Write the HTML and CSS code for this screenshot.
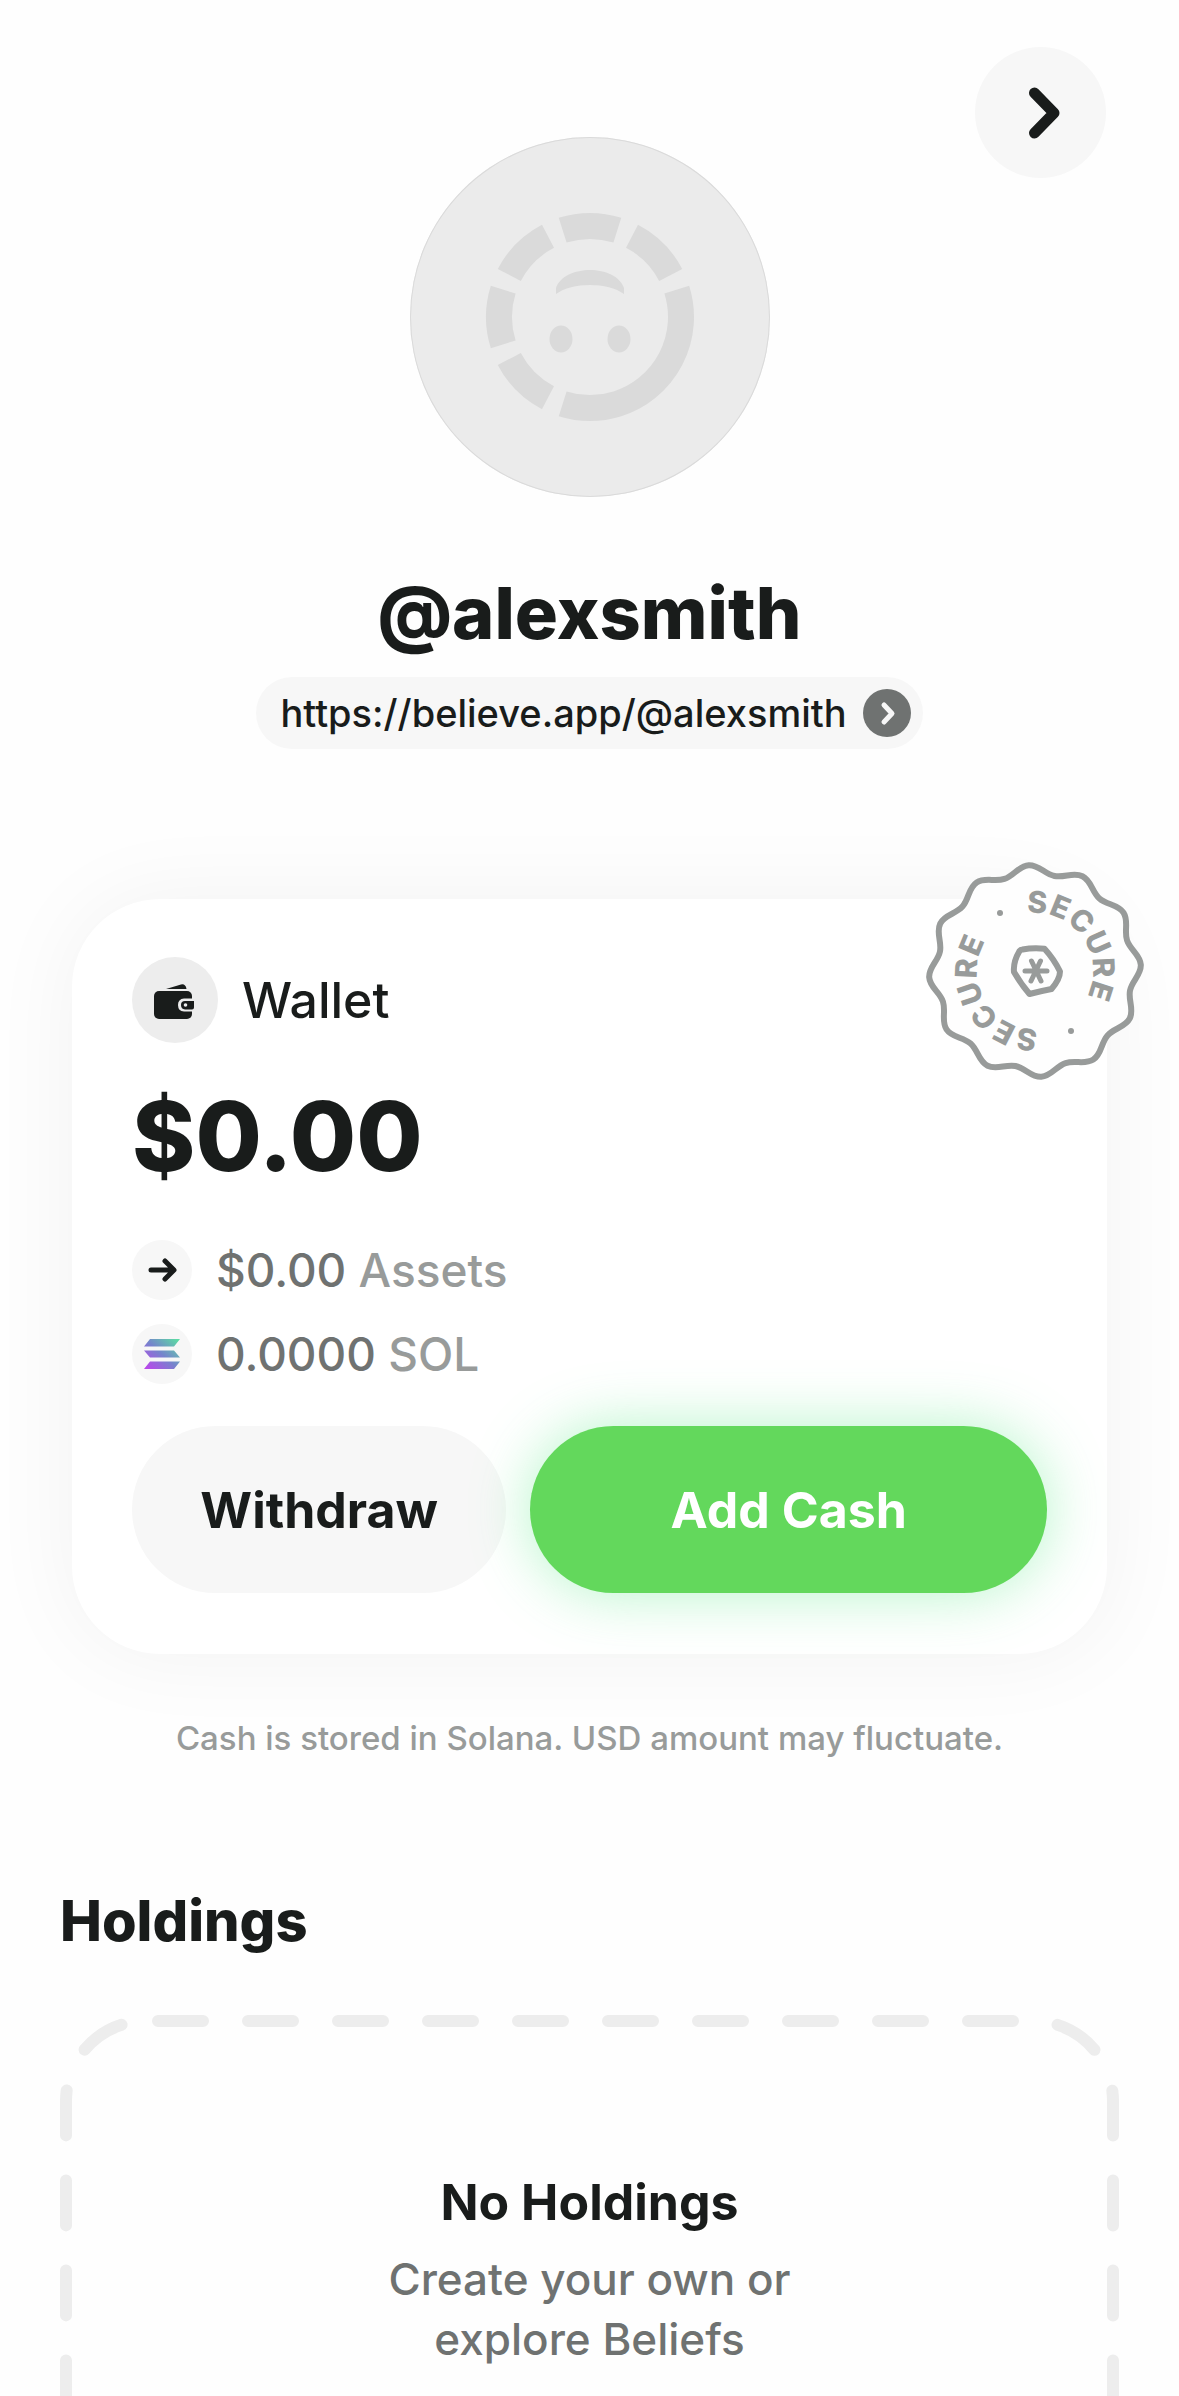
FILE: index.html
```html
<!DOCTYPE html>
<html lang="en">
<head>
    <meta charset="UTF-8">
    <meta name="viewport" content="width=device-width, initial-scale=1.0">
    <title>@alexsmith</title>
    <link rel="stylesheet" href="styles.css">
</head>
<body>
    <main class="page">
        <header class="profile">
            <div class="profile-top">
                <div class="avatar">
                    <svg viewBox="0 0 360 360" aria-hidden="true">
                        <circle class="avatar-ring" cx="180" cy="180" r="91" pathLength="360" transform="rotate(-107.5 180 180)"/>
                        <path d="M146 157V151C154 127 206 127 214 151V157C198 145 162 145 146 157Z"/>
                        <ellipse cx="151" cy="202" rx="11.5" ry="13.5"/>
                        <ellipse cx="209" cy="202" rx="11.5" ry="13.5"/>
                    </svg>
                </div>
                <button class="next-button" type="button" aria-label="Next">
                    <svg viewBox="0 0 131 131" aria-hidden="true">
                        <path d="M59.5 46L79 66L59.5 86"/>
                    </svg>
                </button>
            </div>
            <h1 class="handle">@alexsmith</h1>
            <a class="profile-link" href="https://believe.app/@alexsmith">
                https://believe.app/@alexsmith
                <svg viewBox="0 0 48 48" aria-hidden="true">
                    <circle cx="24" cy="24" r="24"/>
                    <path d="M21 16L29 24.500L21 33"/>
                </svg>
            </a>
        </header>

        <section class="wallet">
            <div class="wallet-title">
                <svg class="wallet-icon" viewBox="0 0 86 86" aria-hidden="true">
                    <circle cx="43" cy="43" r="43" fill="#ededed"/>
                    <path d="M34 32L49 27.500Q53.500 26.500 54.500 32Z"/>
                    <rect x="22" y="34" width="38" height="28" rx="5"/>
                    <path d="M63 41.500H52Q46 42 46 48T52 54.500H63Z" fill="#ededed"/>
                    <path d="M62 44H53Q49 44 49 48T53 52.500H60Q62 52.500 62 50.500Z"/>
                    <circle cx="53.500" cy="48" r="1.800" fill="#ededed"/>
                </svg>
                <h2>Wallet</h2>
            </div>
            <p class="balance">$0.00</p>
            <ul class="amounts">
                <li>
                    <svg class="amount-icon" viewBox="0 0 60 60" aria-hidden="true">
                        <circle cx="30" cy="30" r="30" fill="#f7f7f7"/>
                        <path class="arrow" d="M19 30H41M33 21L42 30L33 39"/>
                    </svg>
                    <span>$0.00 <span class="unit">Assets</span></span>
                </li>
                <li>
                    <svg class="amount-icon" viewBox="0 0 60 60" aria-hidden="true">
                        <defs>
                            <linearGradient id="sol" gradientUnits="userSpaceOnUse" x1="16" y1="46" x2="44" y2="14">
                                <stop offset="0" stop-color="#bb46ec"/>
                                <stop offset="0.5" stop-color="#7584cc"/>
                                <stop offset="1" stop-color="#5cdba4"/>
                            </linearGradient>
                        </defs>
                        <circle cx="30" cy="30" r="30" fill="#f7f7f7"/>
                        <path fill="url(#sol)" d="M18 15H48L42 22.500H12ZM12 26.500H42L48 33.500H18ZM18 37.500H48L42 45H12Z"/>
                    </svg>
                    <span>0.0000 <span class="unit">SOL</span></span>
                </li>
            </ul>
            <div class="actions">
                <button class="button" type="button">Withdraw</button>
                <button class="button button-primary" type="button">Add Cash</button>
            </div>

            <!-- Stamp over the card corner -->
            <svg class="stamp" viewBox="-110 -110 220 220" role="img" aria-label="Secure">
                <defs>
                    <path id="stamp-arc" d="M-8 -57.500A58 58 0 0 1 8 57.500A58 58 0 0 1 -8 -57.500"/>
                </defs>
                <path class="stamp-edge" transform="rotate(-3.400)" d="M106 0C106 10 96.300 15.400 93.700 25.100S96.800 44.300 91.800 53S75.700 61.500 68.600 68.600S61.700 86.800 53 91.800S34.800 91.100 25.100 93.700S10 106 0 106S-15.400 96.300 -25.100 93.700S-44.300 96.800 -53 91.800S-61.500 75.700 -68.600 68.600S-86.800 61.700 -91.800 53S-91.100 34.800 -93.700 25.100S-106 10 -106 0S-96.300 -15.400 -93.700 -25.100S-96.800 -44.300 -91.800 -53S-75.700 -61.500 -68.600 -68.600S-61.700 -86.800 -53 -91.800S-34.800 -91.100 -25.100 -93.700S-10 -106 0 -106S15.400 -96.300 25.100 -93.700S44.300 -96.800 53 -91.800S61.500 -75.700 68.600 -68.600S86.800 -61.700 91.800 -53S91.100 -34.800 93.700 -25.100S106 -10 106 0Z"/>
                <text><textPath href="#stamp-arc">SECURE</textPath></text>
                <text transform="rotate(185)"><textPath href="#stamp-arc">SECURE</textPath></text>
                <circle cx="36" cy="60" r="3"/>
                <circle cx="-35" cy="-58" r="3"/>
                <path class="stamp-shield" d="M-12.500 -21.500Q-2 -23.500 9.500 -22.300Q19 -12 25 .500Q25 8 16.500 18Q6 20 -5.500 23Q-14 13 -21 1Q-22 -9 -15.500 -20Q-14.500 -21.500 -12.500 -21.500Z"/>
                <path class="stamp-star" d="M-10 0H12M-3.500 -10L6 10M5.500 -10L-4 10"/>
            </svg>
        </section>
        <p class="note">Cash is stored in Solana. USD amount may fluctuate.</p>

        <section class="holdings">
            <h2>Holdings</h2>
            <div class="empty">
                <svg class="empty-outline" aria-hidden="true"><rect/></svg>
                <h3>No Holdings</h3>
                <p>Create your own or<br>explore Beliefs</p>
            </div>
        </section>
    </main>
</body>
</html>
```
FILE: styles.css
```css
* {
    margin: 0;
    padding: 0;
    box-sizing: border-box;
}

body {
    font-family: Inter, "Liberation Sans", sans-serif;
    color: #191c1b;
    background: #fefefe;
}

.page {
    height: 100vh;
    overflow: hidden;
}

.profile {
    display: flex;
    flex-direction: column;
    align-items: center;
    padding: 47px 73px 0;
}

/* avatar and button share one grid cell */
.profile-top {
    display: grid;
    width: 100%;
}

.profile-top > * {
    grid-area: 1 / 1;
}

.avatar {
    justify-self: center;
    width: 360px;
    height: 360px;
    margin-top: 90px;
    border-radius: 50%;
    background: #ebebeb;
    box-shadow: inset 0 0 0 1px #dadada;
    fill: #dadada;
}

.avatar-ring {
    fill: none;
    stroke: #dadada;
    stroke-width: 26;
    stroke-dasharray: 35 10 35 10 125 10 35 10 35 10 35 10;
}

.next-button {
    justify-self: end;
    width: 131px;
    height: 131px;
    border: none;
    border-radius: 50%;
    background: #f7f7f7;
    cursor: pointer;
}

.next-button path {
    fill: none;
    stroke: #191c1b;
    stroke-width: 11;
    stroke-linecap: round;
    stroke-linejoin: round;
}

.handle {
    margin-top: 72px;
    font-size: 72px;
    line-height: 88px;
    font-weight: 800;
}

.profile-link {
    display: flex;
    align-items: center;
    gap: 16px;
    height: 72px;
    margin-top: 20px;
    padding: 0 12px 0 24px;
    border-radius: 36px;
    background: #f7f7f7;
    color: #191c1b;
    font-size: 38px;
    font-weight: 500;
    text-decoration: none;
}

.profile-link svg {
    width: 48px;
    height: 48px;
    fill: #6f7271;
}

.profile-link path {
    fill: none;
    stroke: #f7f7f7;
    stroke-width: 5;
    stroke-linecap: round;
    stroke-linejoin: round;
}

.wallet {
    position: relative;
    margin: 150px 72px 0;
    padding: 58px 60px 61px;
    border-radius: 88px;
    background: #fff;
    box-shadow: 0 0 90px rgba(0, 0, 0, 0.05);
}

.wallet-title {
    display: flex;
    align-items: center;
    gap: 24px;
}

.wallet-icon {
    width: 86px;
    height: 86px;
    fill: #191c1b;
}

.wallet-title h2 {
    font-size: 50px;
    font-weight: 500;
}

.balance {
    margin-top: 35px;
    font-size: 96px;
    line-height: 116px;
    font-weight: 800;
}

.amounts {
    display: flex;
    flex-direction: column;
    gap: 24px;
    margin-top: 46px;
    list-style: none;
}

.amounts li {
    display: flex;
    align-items: center;
    gap: 24px;
    height: 60px;
    color: #6f7271;
    font-size: 46px;
    font-weight: 500;
}

.amounts .unit {
    color: #989b9a;
}

.amount-icon {
    width: 60px;
    height: 60px;
}

.arrow {
    fill: none;
    stroke: #191c1b;
    stroke-width: 5;
    stroke-linecap: round;
    stroke-linejoin: round;
}

.actions {
    display: flex;
    gap: 24px;
    margin-top: 42px;
}

.button {
    flex: 374;
    height: 167px;
    border: none;
    border-radius: 84px;
    background: #f7f7f7;
    color: #191c1b;
    font-family: inherit;
    font-size: 50px;
    font-weight: 700;
    cursor: pointer;
}

.button-primary {
    flex: 516;
    background: #63d85c;
    color: #fff;
    box-shadow: 0 0 60px rgba(70, 230, 120, 0.4);
}

.stamp {
    position: absolute;
    top: -38px;
    right: -38px;
    width: 220px;
    height: 220px;
    fill: #989b9a;
}

.stamp text {
    font-size: 30px;
    font-weight: 800;
    letter-spacing: 1px;
}

.stamp-edge,
.stamp-shield,
.stamp-star {
    fill: #fefefe;
    stroke: #989b9a;
    stroke-width: 6;
    stroke-linecap: round;
    stroke-linejoin: round;
}

.stamp-star {
    stroke-width: 5;
}

.note {
    margin-top: 64px;
    color: #989b9a;
    font-size: 33px;
    line-height: 40px;
    font-weight: 500;
    text-align: center;
}

.holdings {
    margin-top: 129px;
    padding: 0 60px;
}

.holdings h2 {
    font-size: 56px;
    line-height: 68px;
    font-weight: 800;
}

.empty {
    position: relative;
    min-height: 515px;
    margin-top: 60px;
    padding-top: 157px;
    text-align: center;
}

.empty-outline {
    position: absolute;
    inset: 0;
    width: 100%;
    height: 100%;
}

.empty-outline rect {
    x: 6px;
    y: 6px;
    width: calc(100% - 12px);
    height: calc(100% - 12px);
    rx: 80px;
    fill: none;
    stroke: #ededed;
    stroke-width: 12;
    stroke-linecap: round;
    stroke-dasharray: 45 45;
    stroke-dashoffset: -12;
}

.empty h3 {
    font-size: 50px;
    line-height: 60px;
    font-weight: 700;
}

.empty p {
    margin-top: 17px;
    color: #6f7271;
    font-size: 44px;
    line-height: 60px;
    font-weight: 500;
}
```
